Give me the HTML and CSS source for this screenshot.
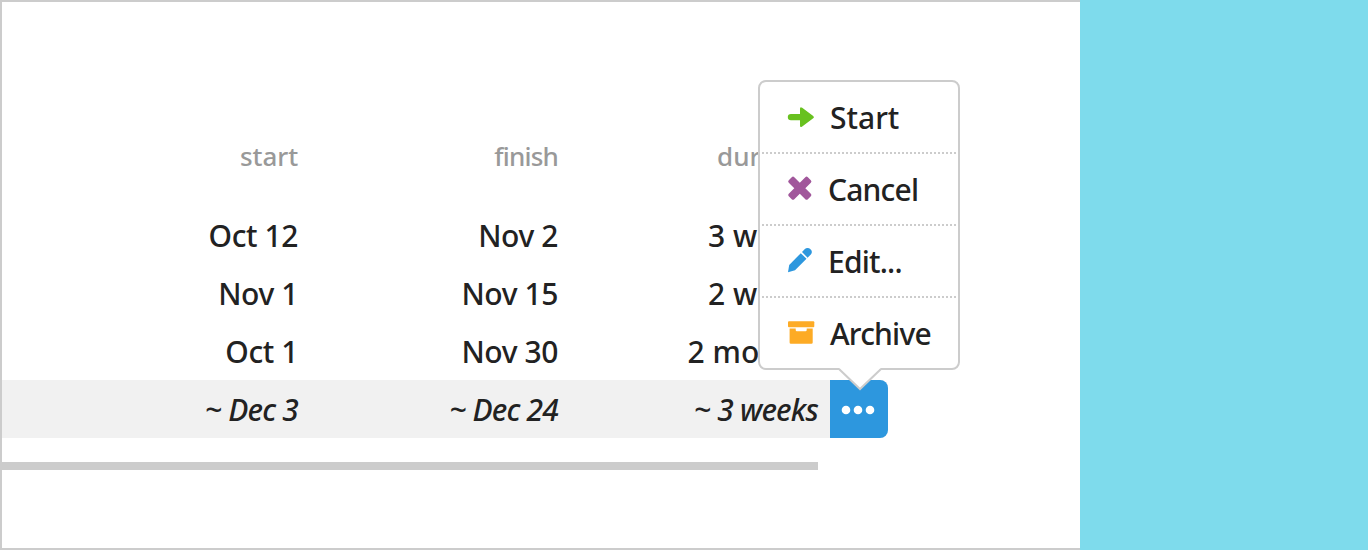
FILE: index.html
```html
<!DOCTYPE html>
<html lang="en">
<head>
    <meta charset="UTF-8">
    <meta name="viewport" content="width=device-width, initial-scale=1.0">
    <title>Schedule</title>
    <link rel="stylesheet" href="styles.css">
</head>
<body>
    <main class="panel">
        <div class="schedule">
            <div class="row row-head">
                <span>start</span>
                <span class="head-finish">finish</span>
                <span class="duration">duration</span>
            </div>
            <div class="row">
                <span>Oct 12</span>
                <span>Nov 2</span>
                <span class="duration">3 weeks</span>
            </div>
            <div class="row">
                <span>Nov 1</span>
                <span>Nov 15</span>
                <span class="duration">2 weeks</span>
            </div>
            <div class="row">
                <span>Oct 1</span>
                <span>Nov 30</span>
                <span class="duration">2 months</span>
            </div>
            <div class="row row-active">
                <span>~ Dec 3</span>
                <span>~ Dec 24</span>
                <span>~ 3 weeks</span>
                <button class="more" aria-label="Actions">
                    <svg width="34" height="10" viewBox="0 0 34 10" fill="#fff">
                        <circle cx="5" cy="5" r="4.3"/>
                        <circle cx="17" cy="5" r="4.3"/>
                        <circle cx="29" cy="5" r="4.3"/>
                    </svg>
                </button>

                <div class="menu">
                    <a class="item item-start">
                        <svg class="icon" viewBox="0 0 28 28" fill="#68c11f">
                            <path d="M4 10.900h9V5.800q0-2.600 2.200-1.100l11 8.200q1.600 1.200 0 2.400l-11 8.200q-2.200 1.500-2.200-1.100V17.300H4a3.200 3.200 0 0 1 0-6.400z"/>
                        </svg>
                        <span>Start</span>
                    </a>
                    <a class="item item-cancel">
                        <svg class="icon" viewBox="0 0 28 28" fill="#a1579b">
                            <g transform="rotate(45 12.800 13.200)">
                                <rect x="-0.700" y="9.300" width="27" height="7.800" rx="1.800"/>
                                <rect x="8.900" y="-0.300" width="7.800" height="27" rx="1.800"/>
                            </g>
                        </svg>
                        <span>Cancel</span>
                    </a>
                    <a class="item item-edit">
                        <svg class="icon" viewBox="0 0 28 28" fill="#2d97de">
                            <path d="M1 25.200l1.200-7.200L13.800 6.200l5.700 5.500L8 23.300z"/>
                            <path d="M15 5l2.600-2.700c3.700-3.600 9.700 1.500 6.200 5.200l-3.200 3.200z"/>
                        </svg>
                        <span>Edit...</span>
                    </a>
                    <a class="item item-archive">
                        <svg class="icon" viewBox="0 0 28 28" fill="#fdab25">
                            <rect x="1" y="2.200" width="26.300" height="6" rx="1"/>
                            <path d="M2.600 9.400H8.700v1.700q0 1.200 1.200 1.200h8.600q1.200 0 1.200-1.200V9.400h6v14q0 1.300-1.300 1.300H3.900q-1.300 0-1.300-1.300z"/>
                        </svg>
                        <span>Archive</span>
                    </a>
                    <svg class="tail" width="44" height="24" viewBox="0 0 44 24">
                        <path d="M1 0L3 2L22 21L41 2L43 0z" fill="#fff"/>
                        <path d="M1 1L22 21L43 1" fill="none" stroke="#ccc" stroke-width="2"/>
                    </svg>
                </div>
            </div>
        </div>
        <div class="scrollbar"></div>
    </main>
</body>
</html>
```

FILE: styles.css
```css
* { box-sizing: border-box; }
body {
    margin: 0;
    height: 550px;
    overflow: hidden;
    background: #7edbec;
    color: #222;
    font-family: "Noto Sans", sans-serif;
    font-size: 30px;
    font-weight: 500;
}
.panel {
    width: 1080px;
    height: 550px;
    padding-top: 126px;
    background: #fff;
    border: 2px solid #ccc;
    border-right: 0;
}
.row {
    position: relative;
    display: grid;
    grid-template-columns: 296px 260px 260px 70px;
    width: 886px;
    height: 58px;
    line-height: 59px;
    letter-spacing: -0.4px;
    text-align: right;
    white-space: nowrap;
}
.row-head {
    height: 78px;
    color: #999;
    font-size: 26px;
    line-height: 57px;
    letter-spacing: -0.1px;
}
.head-finish { letter-spacing: -0.8px; }
.duration {
    margin-right: -5px;
    letter-spacing: 0;
}
.row-head .duration { margin-right: -6px; }
.row-active {
    background: #f1f1f1;
    border-radius: 0 8px 8px 0;
    font-style: italic;
    letter-spacing: -0.8px;
}
.more {
    display: flex;
    align-items: center;
    justify-content: center;
    width: 58px;
    height: 58px;
    margin-left: 12px;
    padding: 2px 2px 0 0;
    border: 0;
    border-radius: 0 8px 8px 0;
    background: #2d97de;
}
.scrollbar {
    width: 816px;
    height: 8px;
    margin-top: 24px;
    background: #ccc;
}

/* popup opens above the actions button */
.menu {
    position: absolute;
    right: -72px;
    bottom: 68px;
    width: 202px;
    height: 290px;
    padding: 0 2px;
    background: #fff;
    border: 2px solid #ccc;
    border-radius: 8px;
    font-style: normal;
    text-align: left;
}
.item {
    display: flex;
    align-items: center;
    gap: 13px;
    height: 72px;
    padding-left: 25px;
    border-bottom: 2px dotted #ccc;
}
.item-start {
    gap: 15px;
    letter-spacing: 0;
}
.item-archive {
    gap: 15px;
    border-bottom-color: transparent;
}
.icon {
    flex: none;
    width: 28px;
    height: 28px;
}
.tail {
    position: absolute;
    left: 78px;
    top: 286px;
}
```
